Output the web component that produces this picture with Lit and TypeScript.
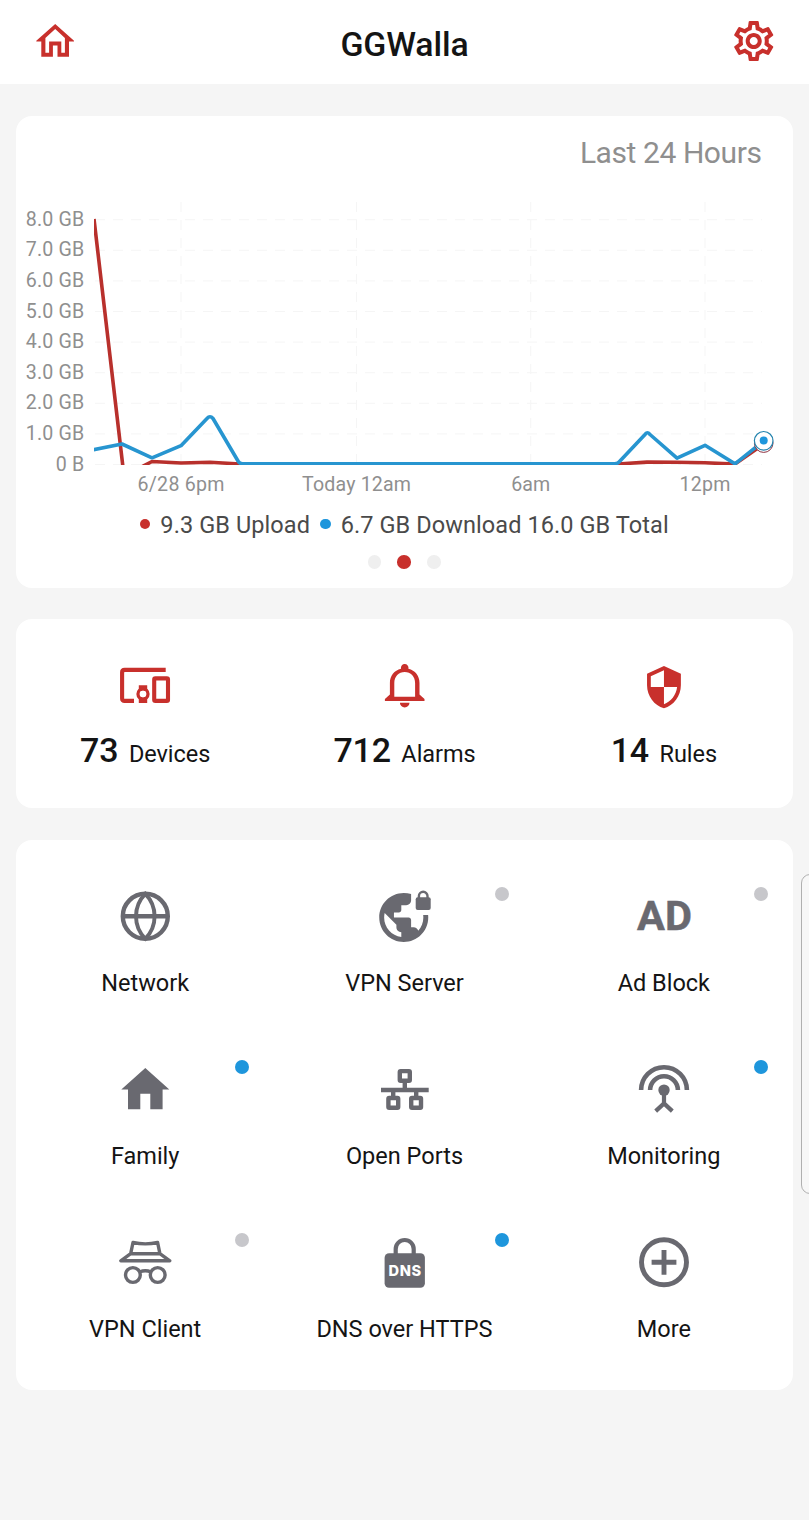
import { LitElement, html, svg, css } from "lit";
import { customElement, property } from "lit/decorators.js";

const RED = "#c8302c";
const BLUE = "#1e96dc";
const GREY = "#696970";

const icons: Record<string, unknown> = {
  home: svg`<path fill=${RED} fill-rule="evenodd" d="M.2 -17.4L19 -.5V.3H14V15.4H2.5V4.2H-2.1V15.4H-13.7V.3H-18.7V-.5ZM.2 -12.2L9.9 -3.4V11.4H6.3V.3H-5.9V11.4H-9.6V-3.4Z"/>`,
  gear: svg`<path fill=${RED} transform="translate(-24.4 -24.4) scale(2.01)" d="M19.43 12.98c.04-.32.07-.64.07-.98 0-.34-.03-.66-.07-.98l2.11-1.65c.19-.15.24-.42.12-.64l-2-3.46c-.09-.16-.26-.25-.44-.25-.06 0-.12.01-.17.03l-2.49 1c-.52-.4-1.08-.73-1.69-.98l-.38-2.65C14.46 2.18 14.25 2 14 2h-4c-.25 0-.46.18-.49.42l-.38 2.65c-.61.25-1.17.59-1.69.98l-2.49-1c-.06-.02-.12-.03-.18-.03-.17 0-.34.09-.43.25l-2 3.46c-.13.22-.07.49.12.64l2.11 1.65c-.04.32-.07.65-.07.98 0 .33.03.66.07.98l-2.11 1.65c-.19.15-.24.42-.12.64l2 3.46c.09.16.26.25.44.25.06 0 .12-.01.17-.03l2.49-1c.52.4 1.08.73 1.69.98l.38 2.65c.03.24.24.42.49.42h4c.25 0 .46-.18.49-.42l.38-2.65c.61-.25 1.17-.59 1.69-.98l2.49 1c.06.02.12.03.18.03.17 0 .34-.09.43-.25l2-3.46c.12-.22.07-.49-.12-.64l-2.11-1.65zm-1.98-1.71c.04.31.05.52.05.73 0 .21-.02.43-.05.73l-.14 1.13.89.7 1.08.84-.7 1.21-1.27-.51-1.04-.42-.9.68c-.43.32-.84.56-1.25.73l-1.06.43-.16 1.13-.2 1.35h-1.4l-.19-1.35-.16-1.13-1.06-.43c-.43-.18-.83-.41-1.23-.71l-.91-.7-1.06.43-1.27.51-.7-1.21 1.08-.84.89-.7-.14-1.13c-.03-.31-.05-.54-.05-.74s.02-.43.05-.73l.14-1.13-.89-.7-1.08-.84.7-1.21 1.27.51 1.04.42.9-.68c.43-.32.84-.56 1.25-.73l1.06-.43.16-1.13.2-1.35h1.39l.19 1.35.16 1.13 1.06.43c.43.18.83.41 1.23.71l.91.7 1.06-.43 1.27-.51.7 1.21-1.07.85-.89.7.14 1.13zM12 8c-2.21 0-4 1.79-4 4s1.79 4 4 4 4-1.79 4-4-1.79-4-4-4zm0 6c-1.1 0-2-.9-2-2s.9-2 2-2 2 .9 2 2-.9 2-2 2z"/>`,
  devices: svg`<g fill="none" stroke=${RED} stroke-width="4.1">
    <path d="M20.7 -17.4H-20.4Q-22.9 -17.4 -22.9 -14.9V11.1Q-22.9 13.6 -20.4 13.6H-11"/>
    <rect x="9.2" y="-8.9" width="13.8" height="22.5" rx="1.2"/>
    <circle cx="-2" cy="6.7" r="4.9" stroke-width="3.5"/></g>
    <path fill=${RED} d="M-6.2 -2H2.2V3H-6.2ZM-6.2 10.4H2.2V15.6H-6.2Z"/><circle cx="-2" cy="6.7" r="3.3" fill="#fff"/>`,
  bell: svg`<path fill=${RED} fill-rule="evenodd" transform="translate(.7 0)" d="M-3.7 -18.5A3.8 3.9 0 1 1 3.7 -18.5C10.5 -16.8 14.8 -11.7 14.8 -4.2V7.2L19.8 11.8V13.8H-19.8V11.8L-14.8 7.2V-4.2C-14.8 -11.7 -10.5 -16.8 -3.7 -18.5ZM-10.4 9.4H10.4V-4.2C10.4 -10.7 6 -15.2 0 -15.2S-10.4 -10.7 -10.4 -4.2ZM-4.8 15.5H4.8A4.8 4.6 0 0 1 -4.8 15.5Z"/>`,
  shield: svg`<path fill=${RED} transform="translate(-22.6 -23.1) scale(1.88 1.91)" d="M12 1L3 5v6c0 5.55 3.84 10.74 9 12 5.16-1.26 9-6.45 9-12V5l-9-4zm0 10.99h7c-.53 4.12-3.28 7.79-7 8.94V12H5V6.3l7-3.11v8.8z"/>`,
  network: svg`<g fill="none" stroke=${GREY} stroke-width="4.4"><circle cx=".3" r="22.5"/>
    <path d="M-22 0H22.6"/><path stroke-width="3.9" d="M.3 -22.5C-12.1 -10 -12.1 10 .3 22.5C12.7 10 12.7 -10 .3 -22.5Z"/></g>`,
  vpnServer: svg`<g transform="translate(.9 0)"><path fill=${GREY} transform="translate(-28.1 -30.7) scale(2.45)" d="M18.92 12c.04.33.08.66.08 1 0 2.08-.8 3.97-2.1 5.39-.26-.81-1-1.39-1.9-1.39h-1v-3c0-.55-.45-1-1-1H7v-2h2c.55 0 1-.45 1-1V8h2c1.1 0 2-.9 2-2V3.46c-.95-.3-1.95-.46-3-.46C5.48 3 1 7.48 1 13s4.48 10 10 10 10-4.48 10-10c0-.34-.02-.67-.05-1h-2.03zM10 20.93c-3.95-.49-7-3.85-7-7.93 0-.62.08-1.21.21-1.79L8 16v1c0 1.1.9 2 2 2v1.93z"/>
    <rect x="10.8" y="-19" width="15" height="12.8" rx="2" fill=${GREY}/>
    <path d="M14 -18V-20.2A4.3 4.3 0 0 1 22.6 -20.2V-18" fill="none" stroke=${GREY} stroke-width="2.4"/></g>`,
  ad: svg`<text class="ad" x=".6" y="13.8" font-size="41.5" textLength="55" text-anchor="middle" fill=${GREY} stroke=${GREY} stroke-width=".5">AD</text>`,
  family: svg`<path fill=${GREY} d="M.3 -21.3L24.3 .2H17.6V20H5.3V4.4H-4.7V20H-17V.2H-23.7Z"/>`,
  ports: svg`<g fill="none" stroke=${GREY} stroke-width="4.4" transform="translate(.9 0)"><rect x="-5.1" y="-18.2" width="10" height="9.6" rx=".8"/>
    <rect x="-16.5" y="8.7" width="9.8" height="9.8" rx=".8"/><rect x="6.3" y="8.7" width="9.8" height="9.8" rx=".8"/>
    <path d="M-.1 -9V.5M-23.9 .7H23.8M-11.7 .7V8.7M11.3 .7V8.7"/></g>`,
  monitoring: svg`<g fill="none" stroke=${GREY} stroke-width="4.6"><path d="M-22.9 .8A22.9 22.9 0 0 1 22.9 .8M-13.9 .8A13.9 13.9 0 0 1 13.9 .8"/>
    <path stroke-width="4.2" d="M0 0V13.9M-8.3 21.8L0 14.1L8.3 21.8"/></g><circle cy=".8" r="5.7" fill=${GREY}/>`,
  vpnClient: svg`<g fill="none" stroke=${GREY} stroke-width="3.4" stroke-linejoin="round"><path d="M-14.3 -8.6L-12 -19.8Q.3 -17 12.6 -19.8L14.9 -8.6ZM-14.3 -8.6L-24.2 -1.5H24.8L14.9 -8.6"/>
    <circle cx="-12.1" cy="12.7" r="7.4"/><circle cx="12.7" cy="12.7" r="7.4"/><path d="M-5.4 9.7Q.3 7.3 6 9.7"/></g>`,
  dns: svg`<g transform="translate(.9 0)"><rect x="-20.3" y="-9" width="40.3" height="34.4" rx="4.5" fill=${GREY}/>
    <path d="M-9.2 -8V-13.3A9 9 0 0 1 8.8 -13.3V-8" fill="none" stroke=${GREY} stroke-width="4.2"/>
    <text class="dns" x="-.1" y="13.5" font-size="14.6" textLength="32.6" text-anchor="middle" fill="#fff">DNS</text></g>`,
  more: svg`<g fill="none" stroke=${GREY} stroke-width="4.9"><circle r="22.5"/><path d="M-12.4 0H12.4M0 -12.4V12.4"/></g>`,
};

@customElement("ui-icon")
class UiIcon extends LitElement {
  @property() name = "";
  static styles = css`
    :host { display: block; width: 60px; height: 60px; }
    svg { display: block; }
    .ad { font-family: Roboto, sans-serif; font-weight: 700; }
    .dns { font-family: Inter, Roboto, sans-serif; font-weight: 800; }
  `;
  render() {
    return html`<svg width="60" height="60" viewBox="-30 -30.3 60 60">${icons[this.name]}</svg>`;
  }
}

@customElement("traffic-chart")
class TrafficChart extends LitElement {
  static styles = css`
    :host { display: block; }
    svg { display: block; }
    text { font-family: Roboto, sans-serif; font-size: 19.6px; fill: #8f8f8f; }
    .grid { stroke: #f5f5f5; stroke-width: 1; stroke-dasharray: 10 8; }
    .line { fill: none; stroke-width: 3.6; stroke-linejoin: round; }
    .up { stroke: #b8302c; }
    .down { stroke: #2795d0; }
  `;
  render() {
    const ticks = [0, 1, 2, 3, 4, 5, 6, 7, 8];
    const hours: [number, string, number][] = [
      [165, "6/28 6pm", 87], [340.5, "Today 12am", 109], [514.7, "6am", 39], [689, "12pm", 51],
    ];
    return html`<svg width="777" height="312" viewBox="0 0 777 312">
      <defs><clipPath id="plot"><rect x="78" y="0" width="680" height="279"/></clipPath></defs>
      ${ticks.map((t) => svg`
        <line class="grid" x1="79" x2="746" y1=${278.5 - 30.6 * t} y2=${278.5 - 30.6 * t}/>
        <text x="68.2" y=${284.6 - 30.6 * t} text-anchor="end" textLength=${t ? 58.5 : 28.5}>${t ? `${t}.0 GB` : "0 B"}</text>`)}
      ${hours.map(([x, label, w]) => svg`
        <line class="grid" x1=${x} x2=${x} y1="16" y2="278"/>
        <text x=${x} y="305" text-anchor="middle" textLength=${w}>${label}</text>`)}
      <g clip-path="url(#plot)">
        <path class="line up" d="M78 33L108 290L136 275.5L165 277L194 276.2L224 278H602L631 276.1L660 276.3L689 276.8L719 278L747.7 258"/>
        <path class="line down" d="M76 264L106 258L136 271.8L165 259.7L191 232.5Q194 229 197 232.5L222 275Q223.5 278 227 277.8L250 277.7H598Q602 278 604 275L629 248.5Q631 245 634 248.5L661 272.2L689 259.3L719 277.8L747.7 255"/>
      </g>
      <circle cx="747.7" cy="257.1" r="9.3" fill="#fff" stroke="#8c3040"/>
      <circle cx="747.7" cy="254.8" r="9.3" fill="#fff" stroke="#2484ae" stroke-width="1.2"/>
      <circle cx="747.7" cy="254.5" r="4" fill=${BLUE}/>
    </svg>`;
  }
}

const stats = [
  { icon: "devices", count: "73", label: "Devices" },
  { icon: "bell", count: "712", label: "Alarms" },
  { icon: "shield", count: "14", label: "Rules" },
];

const features = [
  { icon: "network", label: "Network", status: "" },
  { icon: "vpnServer", label: "VPN Server", status: "off" },
  { icon: "ad", label: "Ad Block", status: "off" },
  { icon: "family", label: "Family", status: "on" },
  { icon: "ports", label: "Open Ports", status: "" },
  { icon: "monitoring", label: "Monitoring", status: "on" },
  { icon: "vpnClient", label: "VPN Client", status: "off" },
  { icon: "dns", label: "DNS over HTTPS", status: "on" },
  { icon: "more", label: "More", status: "" },
];

@customElement("app-root")
class AppRoot extends LitElement {
  static styles = css`
    :host { display: block; position: relative; box-sizing: border-box; width: 100%; height: 1520px; overflow: hidden;
      background: #f5f5f5; color: #141414; font-family: Roboto, sans-serif; }
    header { display: flex; align-items: center; justify-content: space-between; height: 84px; padding: 0 25px; background: #fff; box-sizing: border-box; }
    header ui-icon { margin-top: -2px; }
    h1 { margin: 5px 0 0; font-size: 33.8px; line-height: 40px; font-weight: 500; letter-spacing: -0.1px; }
    main { display: flex; flex-direction: column; padding: 32px 16px 32px 15.5px; }
    .card { background: #fff; border-radius: 16px; }
    .traffic { height: 472px; margin-bottom: 31px; }
    .range { padding: 18px 31.5px 0; height: 70px; box-sizing: border-box; text-align: right; font-size: 30px; line-height: 38px; letter-spacing: -0.42px; color: #8f8f8f; }
    traffic-chart { margin-left: 0.5px; }
    .legend { display: flex; justify-content: center; align-items: center; height: 28px; margin-top: 13px; font-size: 23.5px; letter-spacing: 0.09px; color: #4a4a4a; white-space: pre; }
    .bullet { width: 10.6px; height: 10.6px; border-radius: 50%; margin: 0 10px; position: relative; top: -1px; }
    .bullet:first-child { margin-left: 0; }
    .red { background: #c8302c; }
    .blue { background: #1e96dc; }
    .pager { display: flex; justify-content: center; gap: 16px; margin-top: 16px; }
    .page { width: 13.6px; height: 13.6px; border-radius: 50%; background: #efefef; }
    .page.red { background: #c8302c; }
    .stats { display: grid; grid-template-columns: repeat(3, 259.33px); height: 189px; margin-bottom: 32px; }
    .stat { display: flex; flex-direction: column; align-items: center; padding-top: 38px; }
    .figure { display: flex; align-items: baseline; gap: 10.6px; margin-top: 12px; line-height: 42px; font-size: 23.5px; letter-spacing: -0.05px; }
    .count { font-size: 34px; font-weight: 500; letter-spacing: -0.2px; }
    .features { display: grid; grid-template-columns: repeat(3, 259.33px); grid-auto-rows: 173px; height: 550px; padding-top: 15px; box-sizing: border-box; }
    .feature { position: relative; display: flex; flex-direction: column; align-items: center; padding-top: 31px; box-sizing: border-box; }
    .label { margin-top: 22px; font-size: 23.5px; line-height: 30px; }
    .status { position: absolute; top: 32px; right: 25.5px; width: 14px; height: 14px; border-radius: 50%; }
    .off { background: #c7c7cb; }
    .on { background: #1e96dc; }
    .edge { position: absolute; left: 801px; top: 874px; width: 20px; height: 320px; box-sizing: border-box; border: 1.5px solid #b0b0b0; border-radius: 9px; background: #f7f7f7; }
  `;
  render() {
    return html`
      <header><ui-icon name="home"></ui-icon><h1>GGWalla</h1><ui-icon name="gear"></ui-icon></header>
      <main>
        <section class="card traffic">
          <div class="range">Last 24 Hours</div>
          <traffic-chart></traffic-chart>
          <div class="legend"><i class="bullet red"></i><span>9.3 GB Upload</span><i class="bullet blue"></i><span>6.7 GB Download 16.0 GB Total</span></div>
          <div class="pager"><i class="page"></i><i class="page red"></i><i class="page"></i></div>
        </section>
        <section class="card stats">
          ${stats.map((s) => html`<div class="stat"><ui-icon name=${s.icon}></ui-icon>
            <div class="figure"><span class="count">${s.count}</span><span>${s.label}</span></div></div>`)}
        </section>
        <section class="card features">
          ${features.map((f) => html`<div class="feature"><ui-icon name=${f.icon}></ui-icon>
            <div class="label">${f.label}</div>${f.status ? html`<i class="status ${f.status}"></i>` : ""}</div>`)}
        </section>
      </main>
      <div class="edge"></div>`;
  }
}
